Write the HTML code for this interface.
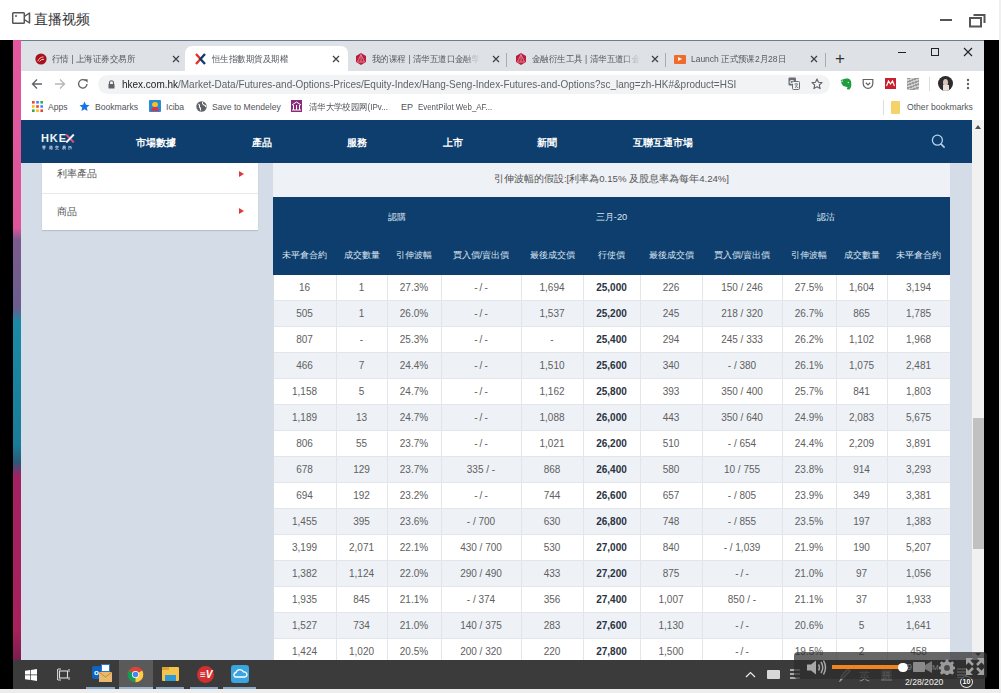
<!DOCTYPE html>
<html><head><meta charset="utf-8">
<style>
*{box-sizing:border-box;margin:0;padding:0}
html,body{width:1001px;height:693px;overflow:hidden;background:#fff;font-family:"Liberation Sans",sans-serif;position:relative}
.a{position:absolute}
#topbar{left:0;top:0;width:1001px;height:40px;background:#fff}
#frame{left:0;top:40px;width:999px;height:649px;background:#000}
#rstrip{left:999px;top:0px;width:2px;height:693px;background:#f0f0f0}
#bstrip{left:0;top:689px;width:1001px;height:4px;background:#ededed}
#lstrip{left:13px;top:40px;width:8px;height:620px;background:linear-gradient(#e4579f 0px,#de559c 188px,#7c5a8e 200px,#6a5e8e 268px,#1a8aa6 282px,#1a7c98 405px,#2a5a7a 422px,#a32062 436px,#a8205c 590px,#7a1e4e 620px)}
#browser{left:21px;top:40px;width:963px;height:620px;background:#fff;overflow:hidden}
#tabbar{left:0;top:0;width:963px;height:31px;background:#dee1e6;border-top:1px solid #6b7c8c}
#toolbar{left:0;top:31px;width:963px;height:25px;background:#fff}
#bmbar{left:0;top:56px;width:963px;height:24px;background:#fff}
#page{left:0;top:80px;width:963px;height:540px;background:#d3dce7;overflow:hidden}
#header{left:0;top:0;width:951px;height:43px;background:#0d3e6e}
#scroll{left:951px;top:0;width:12px;height:540px;background:#f1f1f1}
#taskbar{left:13px;top:660px;width:972px;height:29px;background:#3c3b3c}
.tt{font-size:9px;line-height:14px;color:#55595e;white-space:nowrap;transform:scaleX(0.94);transform-origin:0 0}
.tx{font-size:10px;line-height:14px;color:#333}
.bt{top:5px;font-size:8.6px;line-height:13px;color:#505459;white-space:nowrap}
.nav{top:16px;font-size:10.3px;line-height:13px;font-weight:bold;color:#fff;white-space:nowrap}
.side{font-size:10px;line-height:14px;color:#555}
.tri{width:0;height:0;border-left:5px solid #e03a3e;border-top:3.5px solid transparent;border-bottom:3.5px solid transparent}
.td{height:26px;line-height:26px;text-align:center;font-size:10px;color:#606060;white-space:nowrap}
.tds{font-weight:bold;color:#2b3340}
.th1{top:14px;text-align:center;font-size:9.3px;line-height:13px;color:#dde5ee;white-space:nowrap}
.th2{top:51.5px;text-align:center;font-size:9px;line-height:13px;color:#dde5ee;white-space:nowrap}
</style></head><body>
<div id="topbar" class="a">
  <svg class="a" style="left:11px;top:11px" width="21" height="14" viewBox="0 0 21 14"><rect x="1.7" y="1.7" width="11.6" height="10.6" rx="0.8" fill="none" stroke="#555" stroke-width="1.5"/><circle cx="5" cy="5" r="1" fill="#555"/><path d="M13.3 5.5 L18.5 2 L18.5 12 L13.3 8.5" fill="none" stroke="#555" stroke-width="1.5" stroke-linejoin="round"/></svg>
  <div class="a" style="left:34px;top:11px;font-size:14px;line-height:17px;color:#333">直播视频</div>
  <div class="a" style="left:940px;top:19px;width:12px;height:2px;background:#555"></div>
  <svg class="a" style="left:969px;top:12px" width="18" height="16" viewBox="0 0 18 16"><rect x="1" y="6" width="11" height="8.5" fill="none" stroke="#555" stroke-width="2"/><path d="M4.5 3 H15.5 V11" fill="none" stroke="#555" stroke-width="2"/></svg>
</div>
<div id="frame" class="a"></div>
<div id="rstrip" class="a"></div>
<div id="bstrip" class="a"></div>
<div id="lstrip" class="a"></div>
<div id="browser" class="a">
  <div id="tabbar" class="a">
  <!-- tab1 -->
  <svg class="a" style="left:14px;top:12px" width="12" height="12" viewBox="0 0 12 12"><circle cx="6" cy="6" r="5.6" fill="#a8121a"/><path d="M2.8 8.2 Q4.5 4 8.5 4 M4.5 8.5 Q6 6 9 6.3" stroke="#f4d0d0" stroke-width="1" fill="none"/></svg>
  <div class="a tt" style="left:31px;top:11px;width:115px">行情 | 上海证券交易所</div>
  <svg class="a" style="left:151px;top:14px" width="8" height="8" viewBox="0 0 8 8"><path d="M1 1 L7 7 M7 1 L1 7" stroke="#3c4043" stroke-width="1.2"/></svg>
  <!-- active tab -->
  <div class="a" style="left:164px;top:5px;width:163px;height:26px;background:#fff;border-radius:7px 7px 0 0"></div>
  <svg class="a" style="left:174px;top:12px" width="11" height="12" viewBox="0 0 11 12"><path d="M1 1 L5.5 6 L1 11" stroke="#e5322d" stroke-width="2.4" fill="none"/><path d="M10 1 L5.5 6 L10 11" stroke="#0d3e6e" stroke-width="2.4" fill="none"/></svg>
  <div class="a tt" style="left:191px;top:11px;width:120px">恒生指數期貨及期權</div>
  <svg class="a" style="left:311px;top:14px" width="8" height="8" viewBox="0 0 8 8"><path d="M1 1 L7 7 M7 1 L1 7" stroke="#3c4043" stroke-width="1.2"/></svg>
  <!-- tab3 -->
  <svg class="a" style="left:334px;top:12px" width="12" height="12" viewBox="0 0 12 12"><path d="M6 0 L11 3 L11 9 L6 12 L1 9 L1 3 Z" fill="#b8213e"/><path d="M6 1.5 L9.5 9 L2.5 9 Z M6 1.5 V9" fill="none" stroke="#e87a92" stroke-width="1"/></svg>
  <div class="a tt" style="left:351px;top:11px;width:115px;overflow:hidden;-webkit-mask-image:linear-gradient(90deg,#000 85%,transparent)">我的课程 | 清华五道口金融学院</div>
  <svg class="a" style="left:471px;top:14px" width="8" height="8" viewBox="0 0 8 8"><path d="M1 1 L7 7 M7 1 L1 7" stroke="#3c4043" stroke-width="1.2"/></svg>
  <div class="a" style="left:485px;top:12px;width:1px;height:14px;background:#a9acb0"></div>
  <!-- tab4 -->
  <svg class="a" style="left:494px;top:12px" width="12" height="12" viewBox="0 0 12 12"><path d="M6 0 L11 3 L11 9 L6 12 L1 9 L1 3 Z" fill="#b8213e"/><path d="M6 1.5 L9.5 9 L2.5 9 Z M6 1.5 V9" fill="none" stroke="#e87a92" stroke-width="1"/></svg>
  <div class="a tt" style="left:511px;top:11px;width:115px;overflow:hidden;-webkit-mask-image:linear-gradient(90deg,#000 85%,transparent)">金融衍生工具 | 清华五道口金融</div>
  <svg class="a" style="left:630px;top:14px" width="8" height="8" viewBox="0 0 8 8"><path d="M1 1 L7 7 M7 1 L1 7" stroke="#3c4043" stroke-width="1.2"/></svg>
  <div class="a" style="left:644px;top:12px;width:1px;height:14px;background:#a9acb0"></div>
  <!-- tab5 -->
  <div class="a" style="left:653px;top:14px;width:12px;height:9px;background:#f26b2a;border-radius:1px"></div>
  <div class="a" style="left:657px;top:16px;width:0;height:0;border-left:4px solid #fff;border-top:2.5px solid transparent;border-bottom:2.5px solid transparent"></div>
  <div class="a tt" style="left:670px;top:11px;width:120px">Launch 正式预课2月28日</div>
  <svg class="a" style="left:789px;top:14px" width="8" height="8" viewBox="0 0 8 8"><path d="M1 1 L7 7 M7 1 L1 7" stroke="#3c4043" stroke-width="1.2"/></svg>
  <div class="a" style="left:804px;top:12px;width:1px;height:14px;background:#a9acb0"></div>
  <div class="a" style="left:814px;top:8px;font-size:17px;line-height:20px;color:#333">+</div>
  <!-- window controls -->
  <div class="a" style="left:877px;top:11px;width:8px;height:1px;background:#222"></div>
  <div class="a" style="left:910px;top:7px;width:8px;height:8px;border:1px solid #222"></div>
  <svg class="a" style="left:942px;top:6px" width="10" height="10" viewBox="0 0 10 10"><path d="M1 1 L9 9 M9 1 L1 9" stroke="#222" stroke-width="1.1"/></svg>
</div>
  <div id="toolbar" class="a">
  <svg class="a" style="left:10px;top:7px" width="12" height="12" viewBox="0 0 12 12"><path d="M11 6 H1.5 M6 1.5 L1.5 6 L6 10.5" stroke="#5f6368" stroke-width="1.3" fill="none"/></svg>
  <svg class="a" style="left:33px;top:7px" width="12" height="12" viewBox="0 0 12 12"><path d="M1 6 H10.5 M6 1.5 L10.5 6 L6 10.5" stroke="#b4b7bb" stroke-width="1.3" fill="none"/></svg>
  <svg class="a" style="left:56px;top:7px" width="12" height="12" viewBox="0 0 12 12"><path d="M10 6 A4.2 4.2 0 1 1 8.7 2.8" stroke="#5f6368" stroke-width="1.3" fill="none"/><path d="M7 1.2 L10.6 1.2 L10.6 4.8 Z" fill="#5f6368"/></svg>
  <div class="a" style="left:76.5px;top:3.5px;width:732px;height:19px;background:#f1f3f4;border-radius:9.5px"></div>
  <svg class="a" style="left:87px;top:9px" width="7" height="9" viewBox="0 0 7 9"><path d="M1.5 4 V2.8 A2 2 0 0 1 5.5 2.8 V4" stroke="#5f6368" stroke-width="1.1" fill="none"/><rect x="0.5" y="4" width="6" height="4.6" rx="0.6" fill="#5f6368"/></svg>
  <div class="a" style="left:101px;top:7px;font-size:10.5px;line-height:13px;color:#202124;white-space:nowrap;transform:scaleX(0.95);transform-origin:0 0">hkex.com.hk<span style="color:#5f6368">/Market-Data/Futures-and-Options-Prices/Equity-Index/Hang-Seng-Index-Futures-and-Options?sc_lang=zh-HK#&amp;product=HSI</span></div>
  <svg class="a" style="left:767px;top:6px" width="12" height="13" viewBox="0 0 12 13"><rect x="0.5" y="0.5" width="7.5" height="8" rx="1" fill="#6b6f73"/><rect x="4.5" y="4.5" width="7" height="8" rx="1" fill="#f1f3f4" stroke="#6b6f73" stroke-width="1"/><text x="1.6" y="6.8" font-size="6" font-weight="bold" fill="#fff" font-family="Liberation Sans">G</text><path d="M6.5 7 H10 M8.2 6.2 V7.5 M7 11 Q8.5 9.5 9.5 7.5 M7.5 8.5 Q8.5 10.5 10.5 11" stroke="#6b6f73" stroke-width="0.8" fill="none"/></svg>
  <svg class="a" style="left:790px;top:7px" width="12" height="12" viewBox="0 0 12 12"><path d="M6 1 L7.5 4.3 L11 4.6 L8.3 7 L9.1 10.6 L6 8.7 L2.9 10.6 L3.7 7 L1 4.6 L4.5 4.3 Z" fill="none" stroke="#5f6368" stroke-width="1.1" stroke-linejoin="round"/></svg>
  <svg class="a" style="left:819px;top:7px" width="12" height="12" viewBox="0 0 12 12"><path d="M3 1.5 Q5 0 8 0.6 Q11 1.2 11.3 5 Q11.5 9.5 9.8 11 Q8.5 12 7.2 11.2 Q6.5 10.5 7.5 9.6 L8.5 9.8 Q7 8.8 5 8.6 Q2.5 8.3 1.8 6 Q1 4.5 1.2 3.6 L3 3.6 Z" fill="#1f9e3e"/><path d="M0.5 3 L2.6 0.8 V3 Z" fill="#1f9e3e"/><circle cx="8.3" cy="4.6" r="0.7" fill="#fff"/></svg>
  <svg class="a" style="left:841px;top:7px" width="12" height="12" viewBox="0 0 12 12"><path d="M1.2 1.5 H10.8 V5.5 A4.8 4.8 0 0 1 1.2 5.5 Z" fill="none" stroke="#5f6368" stroke-width="1.2"/><path d="M3.8 4.8 L6 6.9 L8.2 4.8" stroke="#5f6368" stroke-width="1.2" fill="none"/></svg>
  <div class="a" style="left:864px;top:7px;width:11px;height:11px;background:#c8202e"></div>
  <svg class="a" style="left:865px;top:9px" width="9" height="7" viewBox="0 0 9 7"><path d="M0.5 6 L2.5 1 L4.5 4 L6.5 1 L8.5 6" stroke="#fff" stroke-width="1.2" fill="none"/></svg>
  <div class="a" style="left:886px;top:7px;width:12px;height:12px;background:repeating-linear-gradient(160deg,#9a9a9a 0 1.5px,#cfcfcf 1.5px 3px)"></div>
  <div class="a" style="left:908px;top:6px;width:1px;height:14px;background:#dadce0"></div>
  <div class="a" style="left:917px;top:5px;width:15px;height:15px;border-radius:50%;background:#2e2a30;overflow:hidden"><div class="a" style="left:5px;top:3px;width:5px;height:7px;border-radius:50%;background:#d8c6b6"></div><div class="a" style="left:4.5px;top:9px;width:6px;height:8px;background:#e8e0d8"></div></div>
  <svg class="a" style="left:945px;top:7px" width="4" height="12" viewBox="0 0 4 12"><circle cx="2" cy="2" r="1.2" fill="#5f6368"/><circle cx="2" cy="6" r="1.2" fill="#5f6368"/><circle cx="2" cy="10" r="1.2" fill="#5f6368"/></svg>
</div>
  <div id="bmbar" class="a">
  <svg class="a" style="left:11px;top:5px" width="11" height="11" viewBox="0 0 11 11"><rect x="0" y="0" width="2.6" height="2.6" fill="#ea4335"/><rect x="4.2" y="0" width="2.6" height="2.6" fill="#4285f4"/><rect x="8.4" y="0" width="2.6" height="2.6" fill="#34a853"/><rect x="0" y="4.2" width="2.6" height="2.6" fill="#fbbc04"/><rect x="4.2" y="4.2" width="2.6" height="2.6" fill="#ea4335"/><rect x="8.4" y="4.2" width="2.6" height="2.6" fill="#4285f4"/><rect x="0" y="8.4" width="2.6" height="2.6" fill="#34a853"/><rect x="4.2" y="8.4" width="2.6" height="2.6" fill="#fbbc04"/><rect x="8.4" y="8.4" width="2.6" height="2.6" fill="#ea4335"/></svg>
  <div class="a bt" style="left:27px">Apps</div>
  <svg class="a" style="left:58px;top:5px" width="11" height="11" viewBox="0 0 12 12"><path d="M6 0.5 L7.6 4.2 L11.5 4.5 L8.5 7.1 L9.4 11 L6 8.9 L2.6 11 L3.5 7.1 L0.5 4.5 L4.4 4.2 Z" fill="#1a73e8"/></svg>
  <div class="a bt" style="left:74px">Bookmarks</div>
  <div class="a" style="left:128px;top:4px;width:12px;height:12px;background:#2a8ad8;border-radius:1px"></div>
  <div class="a" style="left:131px;top:6px;width:6px;height:5px;border-radius:50%;background:#f5c518"></div>
  <div class="a" style="left:130px;top:11px;width:8px;height:4px;border-radius:4px 4px 0 0;background:#d8344a"></div>
  <div class="a bt" style="left:145px">Iciba</div>
  <svg class="a" style="left:175px;top:5px" width="11" height="11" viewBox="0 0 11 11"><circle cx="5.5" cy="5.5" r="5.2" fill="#5f6368"/><path d="M2.5 3 Q4 4 3.5 6 Q5 7 4.5 9.5 M6.5 1 Q6 3 8 4 Q9.5 4 10 6" stroke="#fff" stroke-width="1.1" fill="none"/></svg>
  <div class="a bt" style="left:191px">Save to Mendeley</div>
  <div class="a" style="left:270px;top:4px;width:11px;height:12px;background:#8b2a7a"></div>
  <svg class="a" style="left:270px;top:5px" width="11" height="10" viewBox="0 0 11 10"><path d="M1 4 L5.5 1 L10 4 M2.5 4 V9 M8.5 4 V9 M5.5 4 V9 M1 9 H10" stroke="#fff" stroke-width="1" fill="none"/></svg>
  <div class="a bt" style="left:288px;transform:scaleX(0.93);transform-origin:0 0">清华大学校园网(IPv...</div>
  <div class="a bt" style="left:380px;font-size:9px">EP</div>
  <div class="a bt" style="left:397px;transform:scaleX(0.92);transform-origin:0 0">EventPilot Web_AF...</div>
  <div class="a" style="left:862px;top:4px;width:1px;height:15px;background:#dadce0"></div>
  <div class="a" style="left:870px;top:5px;width:9px;height:13px;background:#f5d36a;border-radius:1px"></div>
  <div class="a bt" style="left:886px">Other bookmarks</div>
</div>
  <div id="page" class="a">
    <div id="header" class="a">
      <div class="a" style="left:20px;top:13px;font-size:11px;line-height:11px;font-weight:bold;color:#eef4fa;letter-spacing:0.9px;white-space:nowrap">HKE</div>
      <svg class="a" style="left:44px;top:14px" width="10" height="9" viewBox="0 0 10 9"><path d="M1.2 0.5 L8.8 8.5" stroke="#d9507a" stroke-width="2"/><path d="M8.8 0.5 L1.2 8.5" stroke="#eef4fa" stroke-width="2"/></svg>
      <div class="a" style="left:21px;top:25px;width:60px;height:12px;font-size:8px;line-height:10px;font-weight:bold;color:#c9d6e6;letter-spacing:5.2px;white-space:nowrap;transform:scale(0.5);transform-origin:0 0">香港交易所</div>
      <div class="a nav" style="left:115px">市場數據</div>
      <div class="a nav" style="left:231px">產品</div>
      <div class="a nav" style="left:326px">服務</div>
      <div class="a nav" style="left:422px">上市</div>
      <div class="a nav" style="left:516px">新聞</div>
      <div class="a nav" style="left:612px">互聯互通市場</div>
      <svg class="a" style="left:910px;top:14px" width="15" height="15" viewBox="0 0 15 15"><circle cx="6.4" cy="6.2" r="5" fill="none" stroke="#b8d2ec" stroke-width="1.3"/><path d="M9.9 9.9 L13.6 13.6" stroke="#b8d2ec" stroke-width="1.5"/></svg>
    </div>
    <div class="a" style="left:21px;top:43px;width:216px;height:67px;background:#fff;box-shadow:0 1px 1px rgba(0,0,0,0.12)">
      <div class="a side" style="left:15px;top:4px">利率產品</div>
      <div class="a tri" style="left:197px;top:8px"></div>
      <div class="a" style="left:0;top:30px;width:216px;height:1px;background:#e6e9ed"></div>
      <div class="a side" style="left:15px;top:42px">商品</div>
      <div class="a tri" style="left:197px;top:45px"></div>
    </div>
    <div class="a" style="left:252px;top:43px;width:677px;height:34px;background:#eef1f5">
      <div class="a" style="left:0;top:9px;width:677px;text-align:center;font-size:9.6px;line-height:13px;color:#555">引伸波幅的假設:[利率為0.15% 及股息率為每年4.24%]</div>
    </div>
    <div id="thead" class="a" style="left:252px;top:77px;width:677px;height:78px;background:#0d3e6e">
<div class="a th1" style="left:0px;width:248px">認購</div>
<div class="a th1" style="left:310px;width:57px;">三月-20</div>
<div class="a th1" style="left:429px;width:248px">認沽</div>
<div class="a th2" style="left:0px;width:63px">未平倉合約</div>
<div class="a th2" style="left:63px;width:51px">成交數量</div>
<div class="a th2" style="left:114px;width:54px">引伸波幅</div>
<div class="a th2" style="left:168px;width:80px">買入價/賣出價</div>
<div class="a th2" style="left:248px;width:62px">最後成交價</div>
<div class="a th2" style="left:310px;width:57px">行使價</div>
<div class="a th2" style="left:367px;width:62px">最後成交價</div>
<div class="a th2" style="left:429px;width:80px">買入價/賣出價</div>
<div class="a th2" style="left:509px;width:54px">引伸波幅</div>
<div class="a th2" style="left:563px;width:51px">成交數量</div>
<div class="a th2" style="left:614px;width:63px">未平倉合約</div>
</div><!--eh-->
    <div id="tbody" class="a" style="left:252px;top:155px;width:677px">
<div class="a" style="left:0;top:0px;width:677px;height:26px;background:#fff;border-bottom:1px solid #e2e6eb"></div>
<div class="a td" style="left:0px;top:0px;width:63px">16</div>
<div class="a td" style="left:63px;top:0px;width:51px">1</div>
<div class="a td" style="left:114px;top:0px;width:54px">27.3%</div>
<div class="a td" style="left:168px;top:0px;width:80px">-&thinsp;/&thinsp;-</div>
<div class="a td" style="left:248px;top:0px;width:62px">1,694</div>
<div class="a td tds" style="left:310px;top:0px;width:57px">25,000</div>
<div class="a td" style="left:367px;top:0px;width:62px">226</div>
<div class="a td" style="left:429px;top:0px;width:80px">150 / 246</div>
<div class="a td" style="left:509px;top:0px;width:54px">27.5%</div>
<div class="a td" style="left:563px;top:0px;width:51px">1,604</div>
<div class="a td" style="left:614px;top:0px;width:63px">3,194</div>
<div class="a" style="left:0;top:26px;width:677px;height:26px;background:#eef2f7;border-bottom:1px solid #e2e6eb"></div>
<div class="a td" style="left:0px;top:26px;width:63px">505</div>
<div class="a td" style="left:63px;top:26px;width:51px">1</div>
<div class="a td" style="left:114px;top:26px;width:54px">26.0%</div>
<div class="a td" style="left:168px;top:26px;width:80px">-&thinsp;/&thinsp;-</div>
<div class="a td" style="left:248px;top:26px;width:62px">1,537</div>
<div class="a td tds" style="left:310px;top:26px;width:57px">25,200</div>
<div class="a td" style="left:367px;top:26px;width:62px">245</div>
<div class="a td" style="left:429px;top:26px;width:80px">218 / 320</div>
<div class="a td" style="left:509px;top:26px;width:54px">26.7%</div>
<div class="a td" style="left:563px;top:26px;width:51px">865</div>
<div class="a td" style="left:614px;top:26px;width:63px">1,785</div>
<div class="a" style="left:0;top:52px;width:677px;height:26px;background:#fff;border-bottom:1px solid #e2e6eb"></div>
<div class="a td" style="left:0px;top:52px;width:63px">807</div>
<div class="a td" style="left:63px;top:52px;width:51px">-</div>
<div class="a td" style="left:114px;top:52px;width:54px">25.3%</div>
<div class="a td" style="left:168px;top:52px;width:80px">-&thinsp;/&thinsp;-</div>
<div class="a td" style="left:248px;top:52px;width:62px">-</div>
<div class="a td tds" style="left:310px;top:52px;width:57px">25,400</div>
<div class="a td" style="left:367px;top:52px;width:62px">294</div>
<div class="a td" style="left:429px;top:52px;width:80px">245 / 333</div>
<div class="a td" style="left:509px;top:52px;width:54px">26.2%</div>
<div class="a td" style="left:563px;top:52px;width:51px">1,102</div>
<div class="a td" style="left:614px;top:52px;width:63px">1,968</div>
<div class="a" style="left:0;top:78px;width:677px;height:26px;background:#eef2f7;border-bottom:1px solid #e2e6eb"></div>
<div class="a td" style="left:0px;top:78px;width:63px">466</div>
<div class="a td" style="left:63px;top:78px;width:51px">7</div>
<div class="a td" style="left:114px;top:78px;width:54px">24.4%</div>
<div class="a td" style="left:168px;top:78px;width:80px">-&thinsp;/&thinsp;-</div>
<div class="a td" style="left:248px;top:78px;width:62px">1,510</div>
<div class="a td tds" style="left:310px;top:78px;width:57px">25,600</div>
<div class="a td" style="left:367px;top:78px;width:62px">340</div>
<div class="a td" style="left:429px;top:78px;width:80px">- / 380</div>
<div class="a td" style="left:509px;top:78px;width:54px">26.1%</div>
<div class="a td" style="left:563px;top:78px;width:51px">1,075</div>
<div class="a td" style="left:614px;top:78px;width:63px">2,481</div>
<div class="a" style="left:0;top:104px;width:677px;height:26px;background:#fff;border-bottom:1px solid #e2e6eb"></div>
<div class="a td" style="left:0px;top:104px;width:63px">1,158</div>
<div class="a td" style="left:63px;top:104px;width:51px">5</div>
<div class="a td" style="left:114px;top:104px;width:54px">24.7%</div>
<div class="a td" style="left:168px;top:104px;width:80px">-&thinsp;/&thinsp;-</div>
<div class="a td" style="left:248px;top:104px;width:62px">1,162</div>
<div class="a td tds" style="left:310px;top:104px;width:57px">25,800</div>
<div class="a td" style="left:367px;top:104px;width:62px">393</div>
<div class="a td" style="left:429px;top:104px;width:80px">350 / 400</div>
<div class="a td" style="left:509px;top:104px;width:54px">25.7%</div>
<div class="a td" style="left:563px;top:104px;width:51px">841</div>
<div class="a td" style="left:614px;top:104px;width:63px">1,803</div>
<div class="a" style="left:0;top:130px;width:677px;height:26px;background:#eef2f7;border-bottom:1px solid #e2e6eb"></div>
<div class="a td" style="left:0px;top:130px;width:63px">1,189</div>
<div class="a td" style="left:63px;top:130px;width:51px">13</div>
<div class="a td" style="left:114px;top:130px;width:54px">24.7%</div>
<div class="a td" style="left:168px;top:130px;width:80px">-&thinsp;/&thinsp;-</div>
<div class="a td" style="left:248px;top:130px;width:62px">1,088</div>
<div class="a td tds" style="left:310px;top:130px;width:57px">26,000</div>
<div class="a td" style="left:367px;top:130px;width:62px">443</div>
<div class="a td" style="left:429px;top:130px;width:80px">350 / 640</div>
<div class="a td" style="left:509px;top:130px;width:54px">24.9%</div>
<div class="a td" style="left:563px;top:130px;width:51px">2,083</div>
<div class="a td" style="left:614px;top:130px;width:63px">5,675</div>
<div class="a" style="left:0;top:156px;width:677px;height:26px;background:#fff;border-bottom:1px solid #e2e6eb"></div>
<div class="a td" style="left:0px;top:156px;width:63px">806</div>
<div class="a td" style="left:63px;top:156px;width:51px">55</div>
<div class="a td" style="left:114px;top:156px;width:54px">23.7%</div>
<div class="a td" style="left:168px;top:156px;width:80px">-&thinsp;/&thinsp;-</div>
<div class="a td" style="left:248px;top:156px;width:62px">1,021</div>
<div class="a td tds" style="left:310px;top:156px;width:57px">26,200</div>
<div class="a td" style="left:367px;top:156px;width:62px">510</div>
<div class="a td" style="left:429px;top:156px;width:80px">- / 654</div>
<div class="a td" style="left:509px;top:156px;width:54px">24.4%</div>
<div class="a td" style="left:563px;top:156px;width:51px">2,209</div>
<div class="a td" style="left:614px;top:156px;width:63px">3,891</div>
<div class="a" style="left:0;top:182px;width:677px;height:26px;background:#eef2f7;border-bottom:1px solid #e2e6eb"></div>
<div class="a td" style="left:0px;top:182px;width:63px">678</div>
<div class="a td" style="left:63px;top:182px;width:51px">129</div>
<div class="a td" style="left:114px;top:182px;width:54px">23.7%</div>
<div class="a td" style="left:168px;top:182px;width:80px">335 / -</div>
<div class="a td" style="left:248px;top:182px;width:62px">868</div>
<div class="a td tds" style="left:310px;top:182px;width:57px">26,400</div>
<div class="a td" style="left:367px;top:182px;width:62px">580</div>
<div class="a td" style="left:429px;top:182px;width:80px">10 / 755</div>
<div class="a td" style="left:509px;top:182px;width:54px">23.8%</div>
<div class="a td" style="left:563px;top:182px;width:51px">914</div>
<div class="a td" style="left:614px;top:182px;width:63px">3,293</div>
<div class="a" style="left:0;top:208px;width:677px;height:26px;background:#fff;border-bottom:1px solid #e2e6eb"></div>
<div class="a td" style="left:0px;top:208px;width:63px">694</div>
<div class="a td" style="left:63px;top:208px;width:51px">192</div>
<div class="a td" style="left:114px;top:208px;width:54px">23.2%</div>
<div class="a td" style="left:168px;top:208px;width:80px">-&thinsp;/&thinsp;-</div>
<div class="a td" style="left:248px;top:208px;width:62px">744</div>
<div class="a td tds" style="left:310px;top:208px;width:57px">26,600</div>
<div class="a td" style="left:367px;top:208px;width:62px">657</div>
<div class="a td" style="left:429px;top:208px;width:80px">- / 805</div>
<div class="a td" style="left:509px;top:208px;width:54px">23.9%</div>
<div class="a td" style="left:563px;top:208px;width:51px">349</div>
<div class="a td" style="left:614px;top:208px;width:63px">3,381</div>
<div class="a" style="left:0;top:234px;width:677px;height:26px;background:#eef2f7;border-bottom:1px solid #e2e6eb"></div>
<div class="a td" style="left:0px;top:234px;width:63px">1,455</div>
<div class="a td" style="left:63px;top:234px;width:51px">395</div>
<div class="a td" style="left:114px;top:234px;width:54px">23.6%</div>
<div class="a td" style="left:168px;top:234px;width:80px">- / 700</div>
<div class="a td" style="left:248px;top:234px;width:62px">630</div>
<div class="a td tds" style="left:310px;top:234px;width:57px">26,800</div>
<div class="a td" style="left:367px;top:234px;width:62px">748</div>
<div class="a td" style="left:429px;top:234px;width:80px">- / 855</div>
<div class="a td" style="left:509px;top:234px;width:54px">23.5%</div>
<div class="a td" style="left:563px;top:234px;width:51px">197</div>
<div class="a td" style="left:614px;top:234px;width:63px">1,383</div>
<div class="a" style="left:0;top:260px;width:677px;height:26px;background:#fff;border-bottom:1px solid #e2e6eb"></div>
<div class="a td" style="left:0px;top:260px;width:63px">3,199</div>
<div class="a td" style="left:63px;top:260px;width:51px">2,071</div>
<div class="a td" style="left:114px;top:260px;width:54px">22.1%</div>
<div class="a td" style="left:168px;top:260px;width:80px">430 / 700</div>
<div class="a td" style="left:248px;top:260px;width:62px">530</div>
<div class="a td tds" style="left:310px;top:260px;width:57px">27,000</div>
<div class="a td" style="left:367px;top:260px;width:62px">840</div>
<div class="a td" style="left:429px;top:260px;width:80px">- / 1,039</div>
<div class="a td" style="left:509px;top:260px;width:54px">21.9%</div>
<div class="a td" style="left:563px;top:260px;width:51px">190</div>
<div class="a td" style="left:614px;top:260px;width:63px">5,207</div>
<div class="a" style="left:0;top:286px;width:677px;height:26px;background:#eef2f7;border-bottom:1px solid #e2e6eb"></div>
<div class="a td" style="left:0px;top:286px;width:63px">1,382</div>
<div class="a td" style="left:63px;top:286px;width:51px">1,124</div>
<div class="a td" style="left:114px;top:286px;width:54px">22.0%</div>
<div class="a td" style="left:168px;top:286px;width:80px">290 / 490</div>
<div class="a td" style="left:248px;top:286px;width:62px">433</div>
<div class="a td tds" style="left:310px;top:286px;width:57px">27,200</div>
<div class="a td" style="left:367px;top:286px;width:62px">875</div>
<div class="a td" style="left:429px;top:286px;width:80px">-&thinsp;/&thinsp;-</div>
<div class="a td" style="left:509px;top:286px;width:54px">21.0%</div>
<div class="a td" style="left:563px;top:286px;width:51px">97</div>
<div class="a td" style="left:614px;top:286px;width:63px">1,056</div>
<div class="a" style="left:0;top:312px;width:677px;height:26px;background:#fff;border-bottom:1px solid #e2e6eb"></div>
<div class="a td" style="left:0px;top:312px;width:63px">1,935</div>
<div class="a td" style="left:63px;top:312px;width:51px">845</div>
<div class="a td" style="left:114px;top:312px;width:54px">21.1%</div>
<div class="a td" style="left:168px;top:312px;width:80px">- / 374</div>
<div class="a td" style="left:248px;top:312px;width:62px">356</div>
<div class="a td tds" style="left:310px;top:312px;width:57px">27,400</div>
<div class="a td" style="left:367px;top:312px;width:62px">1,007</div>
<div class="a td" style="left:429px;top:312px;width:80px">850 / -</div>
<div class="a td" style="left:509px;top:312px;width:54px">21.1%</div>
<div class="a td" style="left:563px;top:312px;width:51px">37</div>
<div class="a td" style="left:614px;top:312px;width:63px">1,933</div>
<div class="a" style="left:0;top:338px;width:677px;height:26px;background:#eef2f7;border-bottom:1px solid #e2e6eb"></div>
<div class="a td" style="left:0px;top:338px;width:63px">1,527</div>
<div class="a td" style="left:63px;top:338px;width:51px">734</div>
<div class="a td" style="left:114px;top:338px;width:54px">21.0%</div>
<div class="a td" style="left:168px;top:338px;width:80px">140 / 375</div>
<div class="a td" style="left:248px;top:338px;width:62px">283</div>
<div class="a td tds" style="left:310px;top:338px;width:57px">27,600</div>
<div class="a td" style="left:367px;top:338px;width:62px">1,130</div>
<div class="a td" style="left:429px;top:338px;width:80px">-&thinsp;/&thinsp;-</div>
<div class="a td" style="left:509px;top:338px;width:54px">20.6%</div>
<div class="a td" style="left:563px;top:338px;width:51px">5</div>
<div class="a td" style="left:614px;top:338px;width:63px">1,641</div>
<div class="a" style="left:0;top:364px;width:677px;height:26px;background:#fff;border-bottom:1px solid #e2e6eb"></div>
<div class="a td" style="left:0px;top:364px;width:63px">1,424</div>
<div class="a td" style="left:63px;top:364px;width:51px">1,020</div>
<div class="a td" style="left:114px;top:364px;width:54px">20.5%</div>
<div class="a td" style="left:168px;top:364px;width:80px">200 / 320</div>
<div class="a td" style="left:248px;top:364px;width:62px">220</div>
<div class="a td tds" style="left:310px;top:364px;width:57px">27,800</div>
<div class="a td" style="left:367px;top:364px;width:62px">1,500</div>
<div class="a td" style="left:429px;top:364px;width:80px">-&thinsp;/&thinsp;-</div>
<div class="a td" style="left:509px;top:364px;width:54px">19.5%</div>
<div class="a td" style="left:563px;top:364px;width:51px">2</div>
<div class="a td" style="left:614px;top:364px;width:63px">458</div>
<div class="a" style="left:63px;top:0;width:1px;height:390px;background:#e2e6eb"></div>
<div class="a" style="left:114px;top:0;width:1px;height:390px;background:#e2e6eb"></div>
<div class="a" style="left:168px;top:0;width:1px;height:390px;background:#e2e6eb"></div>
<div class="a" style="left:248px;top:0;width:1px;height:390px;background:#e2e6eb"></div>
<div class="a" style="left:310px;top:0;width:1px;height:390px;background:#e2e6eb"></div>
<div class="a" style="left:367px;top:0;width:1px;height:390px;background:#e2e6eb"></div>
<div class="a" style="left:429px;top:0;width:1px;height:390px;background:#e2e6eb"></div>
<div class="a" style="left:509px;top:0;width:1px;height:390px;background:#e2e6eb"></div>
<div class="a" style="left:563px;top:0;width:1px;height:390px;background:#e2e6eb"></div>
<div class="a" style="left:614px;top:0;width:1px;height:390px;background:#e2e6eb"></div>
<div class="a" style="left:0;top:0;width:1px;height:390px;background:#d8dde3"></div>
</div><!--eb-->
    <div id="scroll" class="a">
      <div class="a" style="left:3px;top:5px;width:0;height:0;border-left:3px solid transparent;border-right:3px solid transparent;border-bottom:4px solid #505050"></div>
      <div class="a" style="left:1px;top:298px;width:11px;height:131px;background:#c1c1c1"></div>
    </div>
  </div>
</div>
</div>
<div id="taskbar" class="a">
  <svg class="a" style="left:12px;top:9px" width="12" height="12" viewBox="0 0 12 12"><path d="M0 1.7 L5.3 1 V5.6 H0 Z M6 0.9 L12 0 V5.6 H6 Z M0 6.3 H5.3 V11 L0 10.3 Z M6 6.3 H12 V12 L6 11.1 Z" fill="#fff"/></svg>
  <svg class="a" style="left:44px;top:8px" width="14" height="13" viewBox="0 0 14 13"><rect x="2.5" y="3" width="8" height="7" fill="none" stroke="#ddd" stroke-width="1.1"/><path d="M1 1 H4 M1 12 H4 M12 1 V4 M12 9 V12 M0.6 1 V12" stroke="#ddd" stroke-width="1"/></svg>
  <!-- outlook -->
  <div class="a" style="left:79px;top:6px;width:11px;height:13px;background:#0f64c0;border-radius:2px"></div>
  <div class="a" style="left:81px;top:8px;font-size:8px;line-height:9px;font-weight:bold;color:#fff">o</div>
  <div class="a" style="left:88px;top:4px;width:9px;height:8px;background:#fff;border:1px solid #2a76d2"></div>
  <div class="a" style="left:86px;top:12px;width:13px;height:10px;background:#e9b96e"></div>
  <svg class="a" style="left:86px;top:12px" width="13" height="10" viewBox="0 0 13 10"><path d="M0 0 L6.5 5 L13 0" stroke="#c98a3a" fill="none"/></svg>
  <div class="a" style="left:73px;top:27px;width:29px;height:2px;background:#89a9c9"></div>
  <!-- chrome active -->
  <div class="a" style="left:106px;top:0;width:34px;height:29px;background:#5a5a5a"></div>
  <div class="a" style="left:106px;top:27px;width:34px;height:2px;background:#9ab6d2"></div>
  <svg class="a" style="left:114px;top:6px" width="17" height="17" viewBox="0 0 24 24"><circle cx="12" cy="12" r="11" fill="#db4437"/><path d="M12 12 L2.5 6.5 A11 11 0 0 0 12 23 Z" fill="#0f9d58"/><path d="M12 12 L21.5 6.5 A11 11 0 0 1 12 23 Z" fill="#ffcd40"/><circle cx="12" cy="12" r="5" fill="#fff"/><circle cx="12" cy="12" r="3.9" fill="#4285f4"/></svg>
  <!-- files -->
  <div class="a" style="left:149px;top:7px;width:17px;height:14px;background:#f4c54a;border-radius:1px"></div>
  <div class="a" style="left:149px;top:7px;width:7px;height:3px;background:#d9a636"></div>
  <div class="a" style="left:152px;top:15px;width:11px;height:6px;background:#2a9ad8"></div>
  <div class="a" style="left:143px;top:27px;width:28px;height:2px;background:#89a9c9"></div>
  <!-- expressvpn -->
  <div class="a" style="left:184px;top:6px;width:17px;height:17px;border-radius:50%;background:#d32f2f"></div>
  <div class="a" style="left:187px;top:8px;font-size:10px;line-height:13px;font-weight:bold;color:#fff;font-style:italic">≡V</div>
  <div class="a" style="left:177px;top:27px;width:28px;height:2px;background:#89a9c9"></div>
  <!-- cloud -->
  <div class="a" style="left:218px;top:5px;width:18px;height:18px;background:#3aa5e0;border-radius:3px"></div>
  <svg class="a" style="left:219px;top:8px" width="16" height="12" viewBox="0 0 16 12"><path d="M3 9 A2.5 2.5 0 0 1 4 4.5 A4 4 0 0 1 11.5 4 A2.5 2.5 0 0 1 13 9 Z" fill="none" stroke="#fff" stroke-width="1.3"/></svg>
  <div class="a" style="left:210px;top:27px;width:33px;height:2px;background:#89a9c9"></div>
  <!-- tray -->
  <svg class="a" style="left:732px;top:11px" width="11" height="7" viewBox="0 0 11 7"><path d="M1 6 L5.5 1.5 L10 6" stroke="#eee" stroke-width="1.2" fill="none"/></svg>
  <div class="a" style="left:754px;top:10px;width:13px;height:9px;background:#d8d8d8;border-radius:1px"></div>
  <div class="a" style="left:777px;top:9px;width:10px;height:11px;background:repeating-linear-gradient(#aaa 0 2px,transparent 2px 4px)"></div>
  <svg class="a" style="left:825px;top:8px" width="13" height="14" viewBox="0 0 13 14"><path d="M2 13 Q3 8 6 5 L10 1 L12 3 L8 7 Q5 10 2 13 Z" fill="none" stroke="#9a9a9a" stroke-width="1.2"/></svg>
  <div class="a" style="left:846px;top:10px;font-size:11px;line-height:12px;color:#9a9a9a">英</div>
  <div class="a" style="left:868px;top:9px;width:11px;height:12px;background:#5a5a5a;font-size:9px;line-height:12px;color:#ddd;text-align:center">拼</div>
  <div class="a" style="left:892px;top:17px;font-size:8.6px;line-height:11px;color:#f2f2f2;white-space:nowrap">2/28/2020</div>
  <div class="a" style="left:944px;top:8px;width:10px;height:10px;background:repeating-linear-gradient(#aaa 0 1.5px,transparent 1.5px 3px)"></div>
  <div class="a" style="left:947px;top:16px;width:13px;height:12px;border:1.2px solid #e8e8e8;border-radius:50%;font-size:7px;line-height:10px;text-align:center;color:#fff;font-weight:bold;background:#333">10</div>
</div>
<div class="a" style="left:794px;top:652px;width:193px;height:27px;background:rgba(45,45,45,0.72);border-radius:4px"></div>
<div class="a" style="left:975px;top:653px;width:0;height:0;border-left:3px solid transparent;border-right:3px solid transparent;border-top:3px solid #333"></div>
<svg class="a" style="left:806px;top:660px" width="21" height="15" viewBox="0 0 21 15"><path d="M1 4.5 H5 L10 0.5 V14.5 L5 10.5 H1 Z" fill="#a8a8a8"/><path d="M12.5 4.5 Q14.3 7.5 12.5 10.5 M15 2 Q18.5 7.5 15 13 M17.5 0.5 Q21.5 7.5 17.5 14.5" stroke="#a8a8a8" stroke-width="1.5" fill="none"/></svg>
<div class="a" style="left:832px;top:665px;width:70px;height:3.5px;background:#f0841e"></div>
<div class="a" style="left:898px;top:662.5px;width:9.5px;height:9.5px;border-radius:50%;background:#fff"></div>
<div class="a" style="left:907px;top:661px;font-size:9px;line-height:12px;color:#6a7a9a">9</div>
<div class="a" style="left:913px;top:662px;width:12px;height:10px;background:#8a8a8a;border-radius:1px"></div>
<svg class="a" style="left:925px;top:661px" width="7" height="12" viewBox="0 0 7 12"><path d="M0 4 L7 0 V12 L0 8 Z" fill="#7a7a7a"/></svg>
<div class="a" style="left:932px;top:662px;font-size:8px;line-height:11px;color:#808080">M</div>
<svg class="a" style="left:939px;top:659px" width="16" height="16" viewBox="0 0 18 18"><path d="M7.6 0.5 H10.4 L10.9 3 L12.9 3.8 L15 2.4 L17 4.4 L15.6 6.5 L16.4 8.5 L18 8.6 V11.4 L16.4 11.5 L15.6 13.5 L17 15.6 L15 17.6 L12.9 16.2 L10.9 17 L10.4 18 H7.6 L7.1 17 L5.1 16.2 L3 17.6 L1 15.6 L2.4 13.5 L1.6 11.5 L0 11.4 V8.6 L1.6 8.5 L2.4 6.5 L1 4.4 L3 2.4 L5.1 3.8 L7.1 3 Z" fill="#9a9a9a"/><circle cx="9" cy="10" r="3.3" fill="#4a4a4a"/></svg>
<svg class="a" style="left:965px;top:657px" width="20" height="19" viewBox="0 0 20 19"><path d="M1 1 H8 L1 8 Z M19 1 V8 L12 1 Z M1 18 V11 L8 18 Z M19 18 H12 L19 11 Z" fill="#a0a0a0"/><path d="M4 4 L8 8 M16 4 L12 8 M4 15 L8 11 M16 15 L12 11" stroke="#a0a0a0" stroke-width="2.5"/></svg>
</body></html>
